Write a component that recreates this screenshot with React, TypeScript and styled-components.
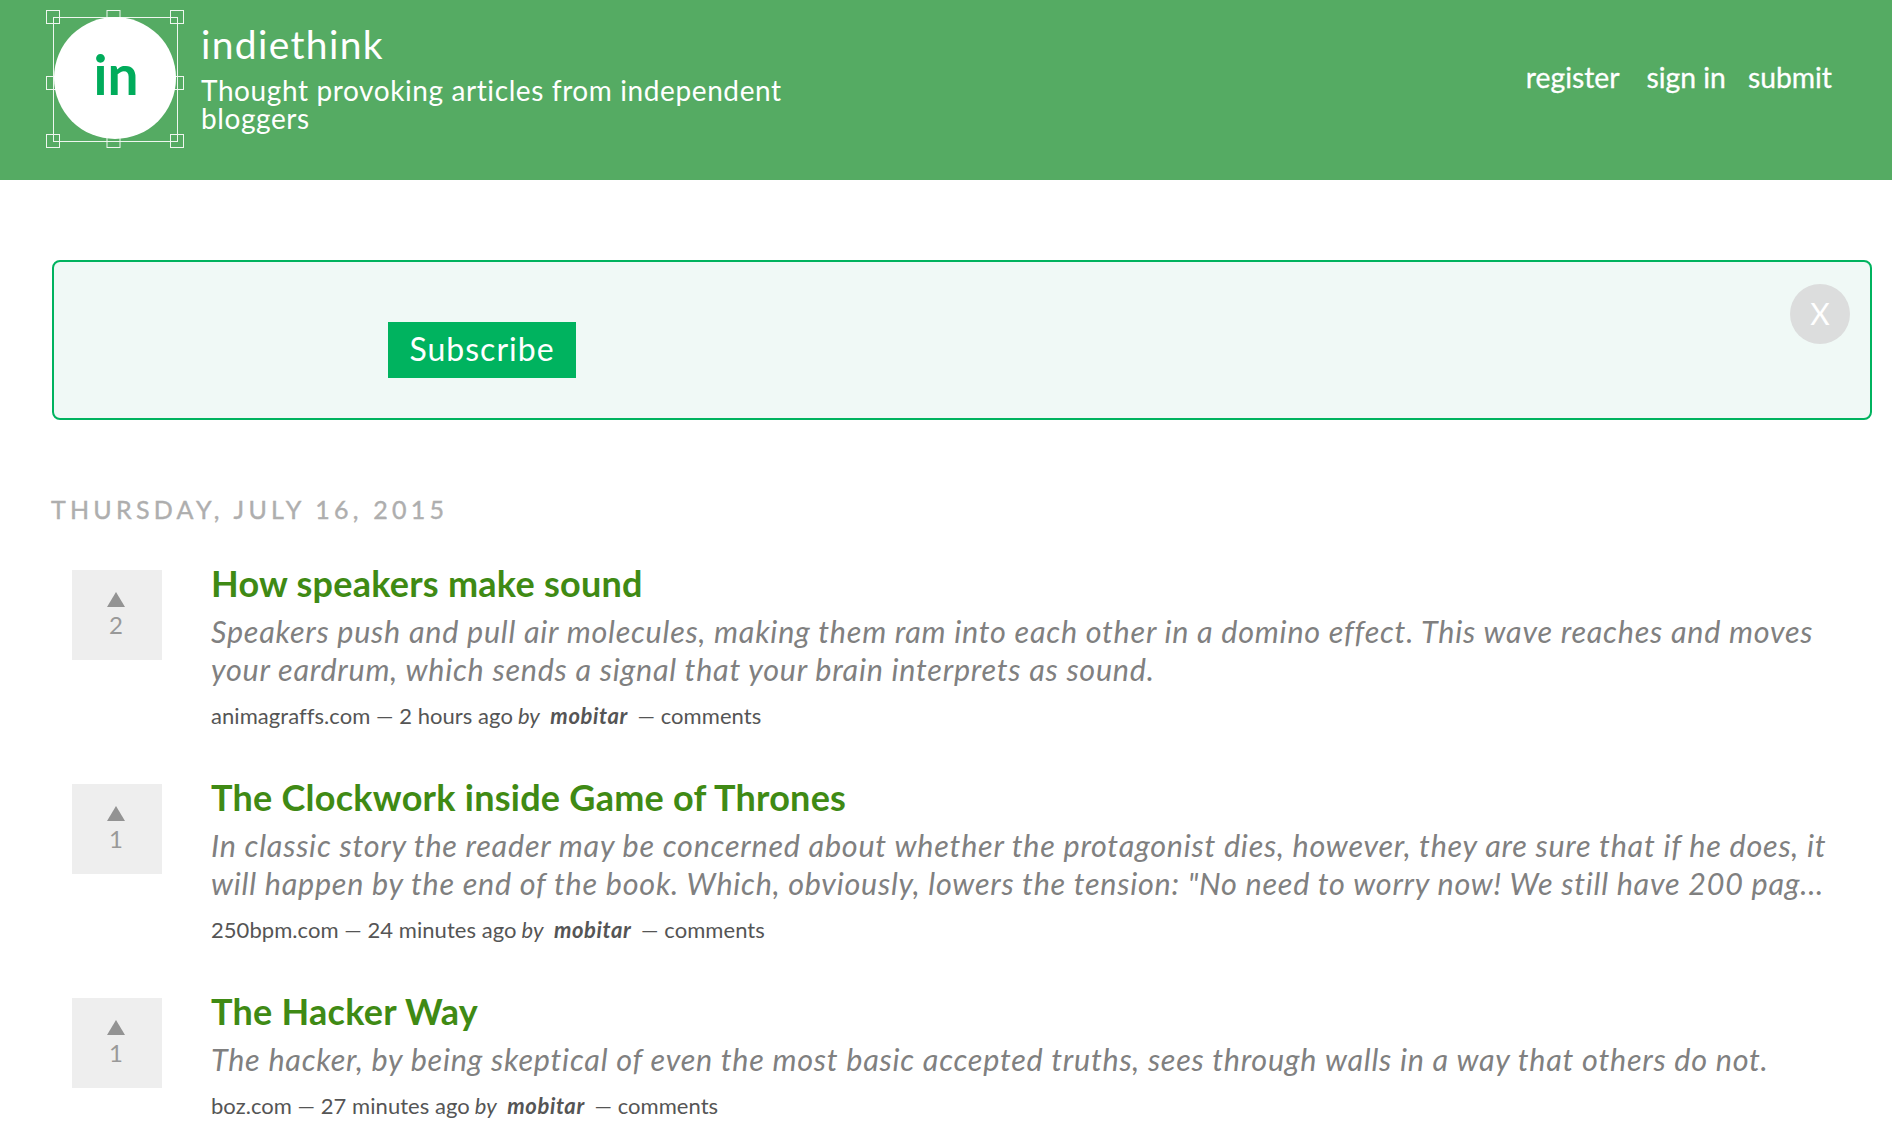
import styled, { createGlobalStyle } from "styled-components";

const GlobalStyle = createGlobalStyle`
  html, body {
    margin: 0;
    padding: 0;
    height: 1134px;
    overflow: hidden;
    background: #fff;
    font-family: "Lato", "Open Sans", sans-serif;
  }
`;

const Header = styled.header`
  height: 180px;
  background: #55ab63;
  display: flex;
  align-items: flex-start;
  padding-left: 46px;
  padding-right: 60px;
  color: #fff;
`;

const LogoBox = styled.div`
  width: 138px;
  height: 138px;
  margin-top: 10px;
  flex: none;
`;

const Brand = styled.div`
  margin-left: 17px;
  width: 620px;
  padding-top: 22px;
`;

const SiteName = styled.div`
  font-size: 39px;
  line-height: 44px;
  letter-spacing: 1.35px;
`;

const Tagline = styled.div`
  font-size: 28px;
  line-height: 28px;
  margin-top: 10px;
  letter-spacing: 0.6px;
`;

const Nav = styled.nav`
  margin-left: auto;
  margin-top: 59px;
  display: flex;
  font-size: 28.3px;
  line-height: 36px;
  -webkit-text-stroke: 0.3px #fff;
`;

const NavLink = styled.a<{ $gap: number }>`
  margin-left: ${(p) => p.$gap}px;
`;

const Main = styled.main`
  padding: 80px 20px 0 51px;
`;

const Banner = styled.div`
  position: relative;
  box-sizing: border-box;
  height: 160px;
  margin-left: 1px;
  border: 2px solid #00b35f;
  border-radius: 8px;
  background: #f0f9f6;
  padding: 60px 0 0 334px;
`;

const SubscribeButton = styled.button`
  width: 188px;
  height: 56px;
  border: 0;
  background: #00b35f;
  color: #fff;
  font-family: inherit;
  font-size: 32px;
  line-height: 54px;
  letter-spacing: 1px;
  padding: 0 0 2px;
`;

const CloseButton = styled.div`
  position: absolute;
  top: 22px;
  right: 20px;
  width: 60px;
  height: 60px;
  border-radius: 50%;
  background: #dcdddd;
  color: #fff;
  font-size: 30px;
  line-height: 58px;
  text-align: center;
`;

const DateHeading = styled.h2`
  margin: 73px 0 0;
  font-size: 25px;
  line-height: 32px;
  font-weight: 400;
  letter-spacing: 4.25px;
  color: #aeaeae;
  -webkit-text-stroke: 0.4px #aeaeae;
`;

const List = styled.div`
  margin-top: 45px;
  padding-left: 21px;
`;

const Row = styled.article`
  display: flex;
  height: 214px;
`;

const VoteBox = styled.div`
  width: 90px;
  height: 90px;
  flex: none;
  background: #eeeeee;
  display: flex;
  flex-direction: column;
  align-items: center;
  padding: 22px 2px 0 0;
  box-sizing: border-box;
`;

const Arrow = styled.div`
  width: 0;
  height: 0;
  border-left: 9px solid transparent;
  border-right: 9px solid transparent;
  border-bottom: 15px solid #939393;
`;

const Count = styled.div`
  font-size: 24px;
  line-height: 30px;
  margin-top: 3px;
  color: #999;
`;

const Body = styled.div`
  margin-left: 49px;
  flex: 1;
  margin-top: -9px;
`;

const Title = styled.a`
  display: block;
  font-size: 36px;
  line-height: 44px;
  font-weight: 700;
  letter-spacing: 0.25px;
  color: #3f8a14;
`;

const Desc = styled.p`
  margin: 7px 0 0;
  font-size: 30.5px;
  line-height: 38px;
  font-style: italic;
  letter-spacing: 0.77px;
  color: #808080;
`;

const Meta = styled.div`
  margin-top: 12px;
  font-size: 22px;
  line-height: 32px;
  letter-spacing: 0.05px;
  color: #555;
`;

const By = styled.em`
  margin-left: 5px;
`;

const Author = styled.b`
  font-style: italic;
  letter-spacing: 0.6px;
  margin: 0 4px 0 5px;
`;

const posts = [
  {
    title: "How speakers make sound",
    desc: "Speakers push and pull air molecules, making them ram into each other in a domino effect. This wave reaches and moves your eardrum, which sends a signal that your brain interprets as sound.",
    site: "animagraffs.com",
    age: "2 hours ago",
    votes: 2,
  },
  {
    title: "The Clockwork inside Game of Thrones",
    desc: 'In classic story the reader may be concerned about whether the protagonist dies, however, they are sure that if he does, it will happen by the end of the book. Which, obviously, lowers the tension: "No need to worry now! We still have 200 pag...',
    site: "250bpm.com",
    age: "24 minutes ago",
    votes: 1,
  },
  {
    title: "The Hacker Way",
    desc: "The hacker, by being skeptical of even the most basic accepted truths, sees through walls in a way that others do not.",
    site: "boz.com",
    age: "27 minutes ago",
    votes: 1,
  },
];

function Logo() {
  const handles = [
    [7, 7],
    [67.5, 7],
    [131, 7],
    [7, 73],
    [131, 73],
    [7, 131],
    [67.5, 131],
    [131, 131],
  ];
  return (
    <svg width="138" height="138" viewBox="0 0 138 138">
      <g fill="none" stroke="#fff" strokeWidth="1" opacity="0.9">
        <rect x="7.5" y="7.5" width="124" height="124" />
        {handles.map(([x, y]) => (
          <rect key={`${x}-${y}`} x={x} y={y} width="13" height="13" transform="translate(-6.5 -6.5)" />
        ))}
      </g>
      <circle cx="69" cy="68" r="61" fill="#fff" />
      <text x="70" y="85" textAnchor="middle" fontFamily="Lato, sans-serif" fontWeight="700" fontSize="55" fill="#00ac5b">
        in
      </text>
    </svg>
  );
}

export default function App() {
  return (
    <>
      <GlobalStyle />
      <Header>
        <LogoBox>
          <Logo />
        </LogoBox>
        <Brand>
          <SiteName>indiethink</SiteName>
          <Tagline>Thought provoking articles from independent bloggers</Tagline>
        </Brand>
        <Nav>
          <NavLink $gap={0}>register</NavLink>
          <NavLink $gap={27}>sign in</NavLink>
          <NavLink $gap={22}>submit</NavLink>
        </Nav>
      </Header>
      <Main>
        <Banner>
          <SubscribeButton>Subscribe</SubscribeButton>
          <CloseButton>X</CloseButton>
        </Banner>
        <DateHeading>THURSDAY, JULY 16, 2015</DateHeading>
        <List>
          {posts.map((post) => (
            <Row key={post.title}>
              <VoteBox>
                <Arrow />
                <Count>{post.votes}</Count>
              </VoteBox>
              <Body>
                <Title>{post.title}</Title>
                <Desc>{post.desc}</Desc>
                <Meta>
                  {post.site} — {post.age}
                  <By>by</By>
                  <Author> mobitar</Author> — comments
                </Meta>
              </Body>
            </Row>
          ))}
        </List>
      </Main>
    </>
  );
}
